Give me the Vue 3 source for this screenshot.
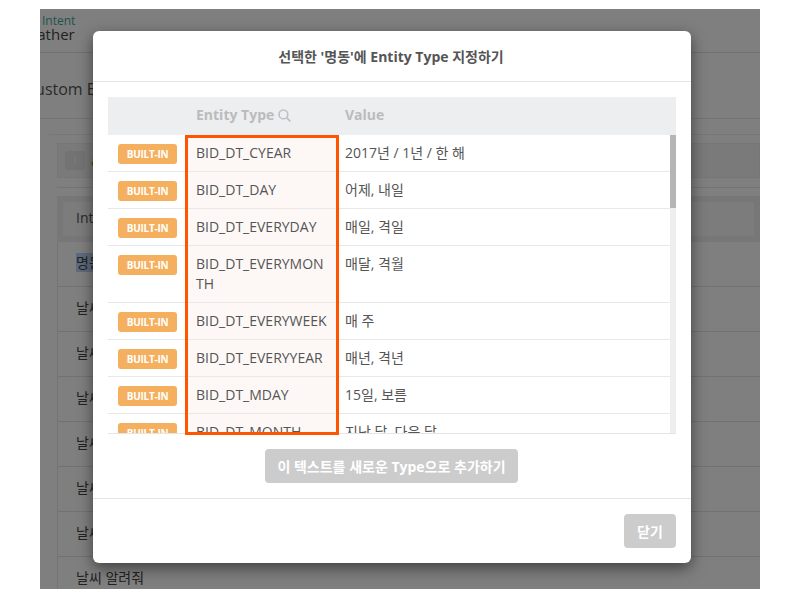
<script setup>
const rows = [
  { type: 'BID_DT_CYEAR', value: '2017년 / 1년 / 한 해' },
  { type: 'BID_DT_DAY', value: '어제, 내일' },
  { type: 'BID_DT_EVERYDAY', value: '매일, 격일' },
  { type: 'BID_DT_EVERYMONTH', value: '매달, 격월' },
  { type: 'BID_DT_EVERYWEEK', value: '매 주' },
  { type: 'BID_DT_EVERYYEAR', value: '매년, 격년' },
  { type: 'BID_DT_MDAY', value: '15일, 보름' },
  { type: 'BID_DT_MONTH', value: '지난 달, 다음 달' }
]
const utterances = ['날씨 알려줘', '날씨 알려줘', '날씨 알려줘', '날씨 알려줘', '날씨 알려줘', '날씨 알려줘', '날씨 알려줘']
</script>

<template>
  <div class="stage">
    <div class="page">
      <div class="top">
        <div class="crumb">Intent</div>
        <div class="name">Weather</div>
      </div>
      <div class="heading">Custom Entity</div>
      <div class="panel">
        <div class="search"><span class="tile">I</span><span class="search-text">a</span></div>
        <div class="gap-line"></div>
        <div class="list">
          <div class="list-head"><span>Intent</span></div>
          <div class="list-row"><mark>명동</mark> 날씨</div>
          <div v-for="(u, i) in utterances" :key="i" class="list-row">{{ u }}</div>
        </div>
      </div>
    </div>
    <div class="scrim"></div>
    <div class="modal">
      <header class="m-head">선택한 '명동'에 Entity Type 지정하기</header>
      <div class="m-body">
        <div class="t-head">
          <div class="c-type th">Entity Type
            <svg class="mag" width="13" height="13" viewBox="0 0 13 13" fill="none" stroke="#c0c0c0" stroke-width="1.6">
              <circle cx="5.4" cy="5.4" r="4.4" />
              <path d="M8.6 8.6 12.4 12.4" stroke-width="1.9" />
            </svg>
          </div>
          <div class="c-val th">Value</div>
        </div>
        <div class="t-body">
          <div v-for="r in rows" :key="r.type" class="t-row">
            <div class="c-badge"><span class="badge">BUILT-IN</span></div>
            <div class="c-type cell">{{ r.type }}</div>
            <div class="c-val cell">{{ r.value }}</div>
          </div>
          <div class="track"><div class="thumb"></div></div>
        </div>
        <div class="mark-box"></div>
        <div class="add-wrap"><button class="btn add">이 텍스트를 새로운 Type으로 추가하기</button></div>
      </div>
      <footer class="m-foot"><button class="btn close">닫기</button></footer>
    </div>
  </div>
</template>

<style>
html, body { background: #fff; }
</style>

<style scoped>
.stage {
  position: relative;
  width: 720px;
  height: 580px;
  margin: 9px 0 0 40px;
  overflow: hidden;
  font-family: "Open Sans", "Noto Sans CJK KR", sans-serif;
  color: #555;
}
.page { background: #fff; height: 100%; }
.top { height: 43px; border-bottom: 1px solid #e0e0e0; padding-left: 2px; }
.crumb { font-size: 12px; line-height: 14px; color: #3fa79c; padding-top: 5px; }
.name { font-size: 15px; line-height: 18px; margin: -3px 0 0 -27px; color: #444; }
.heading {
  height: 65px;
  border-bottom: 1px solid #e8e8e8;
  font-size: 16px;
  line-height: 72px;
  margin-left: -15px;
  color: #555;
  white-space: nowrap;
}
.panel { margin: 15px 0 0 9px; border-top: 1px solid #eee; padding: 8px 0 0 8px; background: #fff; }
.search { height: 33px; background: #f4f4f4; border: 1px solid #ececec; display: flex; align-items: center; padding-left: 7px; gap: 6px; font-size: 14px; }
.tile { width: 20px; height: 19px; background: #e6e6e6; border-radius: 2px; color: #f6f6f6; font-size: 12px; text-align: center; line-height: 19px; }
.search-text { color: #c87a26; }
.gap-line { height: 9px; border-bottom: 1px solid #e8e8e8; }
.list { margin-top: 8px; border-left: 1px solid #e8e8e8; }
.list-head { height: 34px; border: 6px solid #eee; background: #f8f8f8; margin-left: -1px; padding-left: 13px; font-size: 14px; line-height: 32px; box-sizing: content-box; }
.list-row { height: 44px; border-bottom: 1px solid #e4e4e4; padding-left: 18px; font-size: 14px; line-height: 41px; color: #444; }
.list-row:last-child { border-bottom: 0; }
mark { background: #bcd7fc; color: #444; }
.scrim { position: absolute; inset: 0; background: rgba(0, 0, 0, .5); }

.modal {
  position: absolute;
  left: 53px;
  top: 22px;
  width: 598px;
  height: 532px;
  background: #fff;
  border-radius: 6px;
  box-shadow: 0 5px 15px rgba(0, 0, 0, .5);
  display: flex;
  flex-direction: column;
}
.m-head {
  height: 50px;
  border-bottom: 1px solid #e5e5e5;
  text-align: center;
  font-size: 14px;
  font-weight: 700;
  line-height: 51px;
  padding-right: 2px;
  color: #555;
  flex: none;
}
.m-body { position: relative; padding: 15px 15px 0; height: 401px; border-bottom: 1px solid #e5e5e5; flex: none; box-sizing: content-box; }
.t-head { display: flex; height: 38px; background: #edeef0; padding: 0 0 3px 88px; align-items: center; box-sizing: border-box; }
.th { font-size: 14px; font-weight: 700; color: #bbb; }
.t-head .c-type { width: 149px; display: flex; align-items: center; gap: 4px; }
.mag { margin-top: 1px; }
.t-body {
  position: relative;
  height: 299px;
  overflow: hidden;
  border-bottom: 1px solid #e5e5e5;
  box-sizing: border-box;
}
.t-row { display: flex; border-bottom: 1px solid #e8e8e8; min-height: 36px; }
.c-badge { width: 78px; flex: none; padding: 9px 0 0 10px; box-sizing: border-box; }
.badge {
  display: block;
  width: 59px;
  height: 20px;
  border-radius: 3px;
  background: #f4b05f;
  color: #fff;
  font-size: 10px;
  letter-spacing: -.25px;
  font-weight: 700;
  line-height: 20px;
  text-align: center;
}
.cell { font-size: 14px; line-height: 20px; padding-top: 8px; padding-bottom: 8px; color: #555; box-sizing: border-box; }
.t-row .c-type { width: 152px; flex: none; background: #fdf8f6; padding-left: 10px; padding-right: 8px; word-break: break-all; }
.t-row .c-val { padding-left: 7px; }
.track { position: absolute; right: 0; top: 0; bottom: 0; width: 6px; background: #eee; }
.thumb { height: 73px; background: #b5b5b5; }
.mark-box {
  position: absolute;
  left: 92px;
  top: 53px;
  width: 154px;
  height: 300px;
  border: 3px solid #ff5500;
  box-sizing: border-box;
  pointer-events: none;
}
.add-wrap { display: flex; justify-content: center; margin-top: 15px; }
.btn {
  border: 0;
  background: #ccc;
  color: #fff;
  font-family: inherit;
  font-size: 14px;
  font-weight: 700;
  border-radius: 4px;
  padding: 0;
}
.add { width: 253px; height: 34px; margin-left: -1px; }
.m-foot { display: flex; justify-content: flex-end; padding: 15px 15px 0; }
.close { width: 52px; height: 34px; }
</style>
